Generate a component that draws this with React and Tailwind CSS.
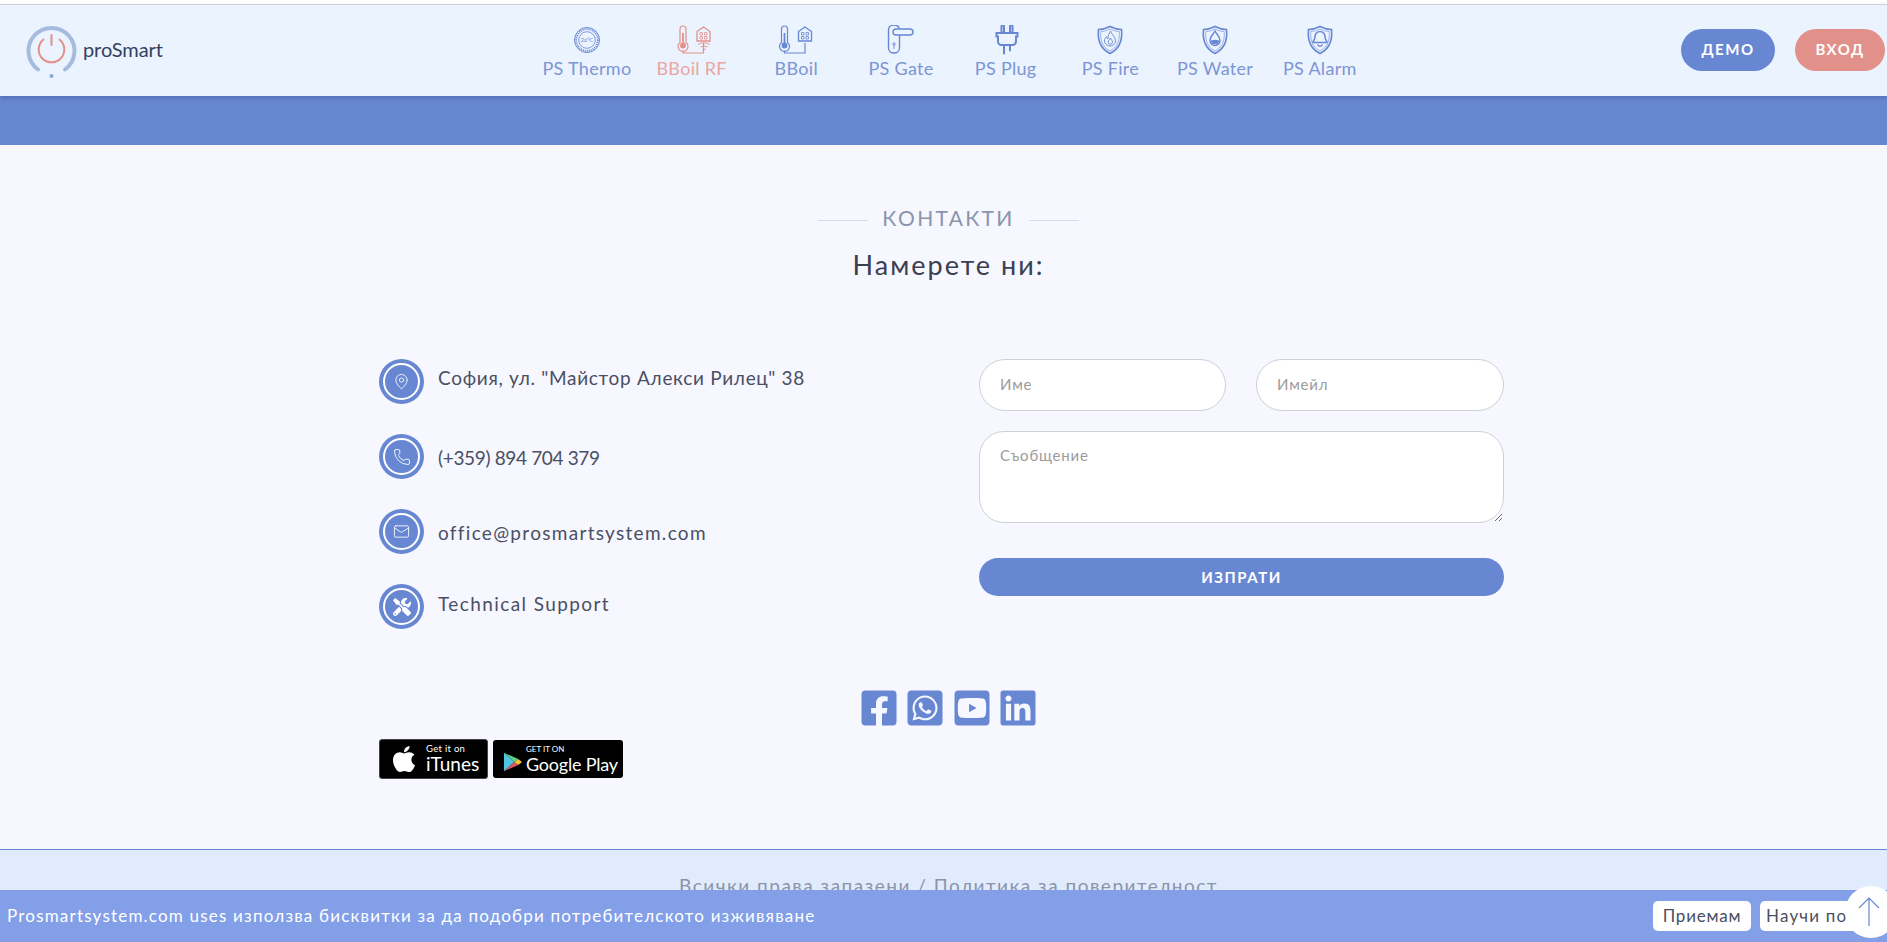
import React from "react";
import { FaFacebookSquare, FaWhatsappSquare, FaYoutubeSquare, FaLinkedin, FaApple, FaTools } from "react-icons/fa";
import { MapPin, Phone, Mail } from "lucide-react";

const B = "#6887d3";
const R = "#e2918a";

function Thermo() {
  return (
    <svg width="40" height="32" viewBox="0 0 40 32" fill="none" stroke={B}>
      <circle cx="20" cy="15" r="12.500" strokeWidth="1" />
      <circle cx="20" cy="15" r="10.800" strokeWidth="1.800" strokeDasharray="1 1" />
      <circle cx="20" cy="15" r="8.300" strokeWidth="0.800" />
      <text x="20" y="17" fontSize="5.500" textAnchor="middle" fill={B} stroke="none" fontFamily="Lato">26°C</text>
    </svg>
  );
}
function Boil({ c, wifi }) {
  const d = wifi ? 2.5 : 0;
  return (
    <svg width="40" height="32" viewBox="0 0 40 32" fill="none" stroke={c} strokeWidth="1.200">
      <g transform={`translate(${d} 0)`}>
        <path d="M5.500 4a3 3 0 0 1 6 0v13.500a5 5 0 1 1-6 0z" />
        <path d="M8.500 8v12" strokeWidth="1.800" />
        <circle cx="8.500" cy="20.500" r="2.300" fill={c} />
        <path d="M8.500 25.500v2.500h20.500v-10" />
        <path d="M22.500 6.500l6.500-4.500 6.500 4.500v9.500h-13z" strokeWidth="1.300" />
        <path d="M25.500 7.500h2.500v2.500h-2.500zM30 7.500h2.500v2.500h-2.500zM25.500 11.500h2.500v2.500h-2.500zM30 11.500h2.500v2.500h-2.500z" strokeWidth="0.800" />
      </g>
      {wifi && <path d="M26 19.500q6-3.500 12 0M28.500 22q3.500-2 7 0M30.500 24.500q1.500-1 3 0" strokeWidth="0.900" />}
    </svg>
  );
}
function Gate() {
  return (
    <svg width="40" height="32" viewBox="0 0 40 32" fill="none" stroke={B} strokeWidth="1.400">
      <path d="M18 3.500V2.500C17 .5 15 0 13 0 10 0 7.500 2 7.500 5v18c0 3 2.500 5 5.500 5s5.500-2 5.500-5V10" />
      <rect x="12" y="4" width="20" height="6" rx="3" />
      <circle cx="13" cy="19" r="1.200" strokeWidth="0.900" />
      <path d="M13 20v4" strokeWidth="0.900" />
    </svg>
  );
}
function Plug() {
  return (
    <svg width="40" height="32" viewBox="0 0 40 32" fill="none" stroke={B} strokeWidth="2">
      <path d="M15.500 7V1a1.300 1.300 0 0 1 2.500 0V7M24 7V1a1.300 1.300 0 0 1 2.500 0V7" />
      <path d="M10.500 8h21v3.500h-1.500v5a3.500 3.500 0 0 1-3.500 3.500H15.500a3.500 3.500 0 0 1-3.500-3.500v-5h-1.500z" />
      <path d="M18 20v8.500M24 20v5.500" strokeLinecap="round" />
    </svg>
  );
}
function Shield({ kind }) {
  return (
    <svg width="40" height="32" viewBox="0 0 40 32" fill="none" stroke={B} strokeWidth="1.200">
      <path d="M20 1.500C16 3.500 12 4.500 8.500 4.500 7.500 14 9 23 20 28.500 31 23 32.500 14 31.500 4.500 28 4.500 24 3.500 20 1.500z" strokeWidth="1.600" />
      <path d="M20 4C17 5.500 13.500 6.500 10.800 6.500 10.200 14 11.500 21.500 20 26 28.500 21.500 29.800 14 29.200 6.500 26.500 6.500 23 5.500 20 4z" strokeWidth="0.600" />
      {kind === "fire" && <path d="M20.500 6c.5 3 5 5 5 10a5.500 5 0 0 1-11 0c0-2 1-3.500 2-4.500.2 1.500.8 2 1.500 2.500-.3-3 1.500-5.500 2.500-8zM20.500 13c.3 1.500 2 2.500 2 4a2.200 2.200 0 0 1-4.400 0c0-1.500 2-2.500 2.400-4z" strokeWidth="0.900" />}
      {kind === "water" && <><path d="M20 6c1.500 3 5 5.500 5 9.500a5 5 0 0 1-10 0c0-4 3.500-6.500 5-9.500z" strokeWidth="1.400" /><path d="M16.500 16a3.600 3.600 0 0 0 7 0q-3.500-1.500-7 0z" fill={B} /></>}
      {kind === "alarm" && <path d="M20 6.500a5 5 0 0 1 5 5c0 3.500 2 4 2 6H13c0-2 2-2.500 2-6a5 5 0 0 1 5-5zM17.500 19.500a2.700 2.700 0 0 0 5 0" strokeWidth="1.500" />}
    </svg>
  );
}

const nav = [
  ["PS Thermo", <Thermo />, false],
  ["BBoil RF", <Boil c={R} wifi />, true],
  ["BBoil", <Boil c={B} />, false],
  ["PS Gate", <Gate />, false],
  ["PS Plug", <Plug />, false],
  ["PS Fire", <Shield kind="fire" />, false],
  ["PS Water", <Shield kind="water" />, false],
  ["PS Alarm", <Shield kind="alarm" />, false],
];

function Logo() {
  return (
    <svg width="60" height="62" viewBox="0 0 60 62" fill="none">
      <path d="M16 48.500A23 23 0 1 1 43 48.500" stroke="#a5bcde" strokeWidth="4" strokeLinecap="round" />
      <path d="M21.500 18.500A12.800 12.800 0 1 0 37.500 18.500" stroke={R} strokeWidth="2" strokeLinecap="round" />
      <path d="M29.500 14v10" stroke={R} strokeWidth="2" strokeLinecap="round" />
      <circle cx="29.500" cy="55" r="2" fill="#8ea8d4" />
    </svg>
  );
}

function Contact({ icon, children, textClass }) {
  return (
    <div className="flex items-center gap-[14px] h-[45px]">
      <div className="w-[45px] h-[45px] rounded-full bg-[#6887d3] flex items-center justify-center shrink-0">
        <div className="w-[37px] h-[37px] rounded-full border-2 border-white flex items-center justify-center text-white">
          {icon}
        </div>
      </div>
      <span className={"text-[19px] text-[#4a4f63] " + textClass}>{children}</span>
    </div>
  );
}

export default function App() {
  return (
    <div className="relative w-full h-[942px] overflow-hidden bg-[#f6f7ff] flex flex-col font-['Lato','Open_Sans',sans-serif]">
      <div className="h-[5px] bg-white border-b border-[#d9d9d9]" />
      <header className="relative z-10 h-[91px] bg-[#ebf3fe] flex items-center shadow-[0_2px_5px_rgba(40,60,120,0.35)]">
        <div className="w-[534.6px] shrink-0 flex items-center pl-[22px] gap-[1px] pt-[2px]">
          <Logo />
          <span className="text-[20px] text-[#34415f] -tracking-[0.1px] -mt-[5px]">proSmart</span>
        </div>
        <nav className="flex pt-[2px]">
          {nav.map(([t, icon, red]) => (
            <div key={t} className="w-[104.7px] flex flex-col items-center">
              <div className="h-[32px] mt-[1px] -mb-[1px]">{icon}</div>
              <span className={"text-[18px] leading-[24px] tracking-[0.3px] " + (red ? "text-[#e8a6a1]" : "text-[#7d95d4]")}>{t}</span>
            </div>
          ))}
        </nav>
        <div className="ml-auto flex gap-[20px] pr-[2px] -mt-[2px]">
          <button className="w-[94px] h-[42px] rounded-full bg-[#6887d3] text-white font-bold text-[15px] tracking-[1.5px]">ДЕМО</button>
          <button className="w-[90px] h-[42px] rounded-full bg-[#e2918a] text-white font-bold text-[15px] tracking-[1.5px]">ВХОД</button>
        </div>
      </header>
      <div className="h-[49px] bg-[#6887d3]" />

      <main className="flex-1 flex flex-col">
        <div className="flex items-center justify-center gap-[14px] mt-[60px] h-[26px] pl-[10px]">
          <div className="w-[50px] h-px bg-[#d9dde6] mt-[5px]" />
          <span className="text-[21px] text-[#8a94ab] tracking-[2.3px]">КОНТАКТИ</span>
          <div className="w-[50px] h-px bg-[#d9dde6] mt-[5px]" />
        </div>
        <h1 className="text-center text-[27px] leading-[34px] mt-[17px] pl-[10px] text-[#3b4050] tracking-[2px]">Намерете ни:</h1>

        <div className="flex ml-[379px] mt-[77px]">
          <div className="w-[600px] flex flex-col gap-[30px]">
            <Contact icon={<MapPin size={17} strokeWidth={1.2} />} textClass="-mt-[6px] tracking-[0.7px]">София, ул. "Майстор Алекси Рилец" 38</Contact>
            <Contact icon={<Phone size={18} strokeWidth={1.2} />} textClass="mt-[4px] -tracking-[0.35px]">(+359) 894 704 379</Contact>
            <Contact icon={<Mail size={17} strokeWidth={1.2} />} textClass="mt-[4px] tracking-[1.3px]">office@prosmartsystem.com</Contact>
            <Contact icon={<FaTools size={18} />} textClass="-mt-[4px] tracking-[1.4px]">Technical Support</Contact>
          </div>
          <form className="w-[525px] flex flex-col">
            <div className="flex justify-between">
              <input placeholder="Име" className="w-[247px] h-[52px] rounded-[26px] border border-[#cfd0d8] bg-white pl-[20px] pb-[3px] text-[15px] tracking-[0.8px] placeholder:text-[#9c9c9c] outline-none" />
              <input placeholder="Имейл" className="w-[248px] h-[52px] rounded-[26px] border border-[#cfd0d8] bg-white pl-[20px] pb-[3px] text-[15px] tracking-[0.8px] placeholder:text-[#9c9c9c] outline-none" />
            </div>
            <textarea placeholder="Съобщение" className="mt-[20px] h-[92px] rounded-[25px] border border-[#cfd0d8] bg-white px-[20px] pt-[12px] text-[15px] tracking-[0.8px] placeholder:text-[#9c9c9c] outline-none" />
            <button type="button" className="mt-[35px] h-[38px] rounded-full bg-[#6887d3] text-white font-bold text-[15px] tracking-[1.5px]">ИЗПРАТИ</button>
          </form>
        </div>

        <div className="flex gap-[6.500px] ml-[858.500px] mt-[61px] text-[#6887d3] text-[40px] h-[36px] items-center">
          <FaFacebookSquare />
          <FaWhatsappSquare />
          <FaYoutubeSquare />
          <FaLinkedin />
        </div>

        <div className="flex items-center gap-[5px] ml-[379px] mt-[13px]">
          <div className="w-[109px] h-[40px] bg-black rounded-[3px] border border-[#444] flex items-center text-white pl-[9px] gap-[7px]">
            <FaApple size={30} />
            <div className="flex flex-col leading-none">
              <span className="text-[9.500px] tracking-[0.3px]">Get it on</span>
              <span className="text-[19px] leading-[20px]">iTunes</span>
            </div>
          </div>
          <div className="w-[130px] h-[38px] bg-black rounded-[3px] flex items-center text-white pl-[10px] gap-[4px]">
            <svg width="19" height="20" viewBox="0 0 20 26" preserveAspectRatio="none" className="mt-[5px]">
              <path d="M1 1v24l11-12z" fill="#4fc3e0" />
              <path d="M1 1l11 12 4-4z" fill="#5fd08a" />
              <path d="M1 25l11-12 4 4z" fill="#e25560" />
              <path d="M16 9l-4 4 4 4 4-4z" fill="#f5c33b" />
            </svg>
            <div className="flex flex-col leading-none whitespace-nowrap">
              <span className="text-[8px] tracking-[0px] leading-[10px]">GET IT ON</span>
              <span className="text-[18px] leading-[20px] -tracking-[0.2px]">Google Play</span>
            </div>
          </div>
        </div>
      </main>

      <footer className="h-[93px] shrink-0 border-t border-[#6887d3] bg-[#e0ebfd] text-center text-[19px] text-[#8a94ab] pt-[22px] pl-[10px] tracking-[1.5px]">
        Всички права запазени / Политика за поверителност
      </footer>

      <div className="absolute left-0 right-0 bottom-0 h-[52px] bg-[#829fe8] flex items-center pl-[7px] z-20">
        <span className="text-white text-[17px] tracking-[1.2px]">Prosmartsystem.com uses използва бисквитки за да подобри потребителското изживяване</span>
        <div className="ml-auto flex gap-[9px] mr-[-8px]">
          <button className="w-[98px] h-[30px] rounded-[5px] bg-white text-[#4a4f63] text-[17px] tracking-[0.8px]">Приемам</button>
          <button className="w-[135px] h-[30px] rounded-[5px] bg-white text-[#4a4f63] text-[17px] tracking-[1.2px] text-left pl-[6px] whitespace-nowrap">Научи повече</button>
        </div>
      </div>
      <div className="absolute z-30 left-[1845px] top-[886px] w-[52px] h-[52px] rounded-full bg-white flex items-center justify-center">
        <svg width="52" height="52" viewBox="0 0 52 52" fill="none" stroke="#6887d3" strokeWidth="1.200">
          <path d="M24 12v28M14 22L24 12l10 10" />
        </svg>
      </div>
    </div>
  );
}
